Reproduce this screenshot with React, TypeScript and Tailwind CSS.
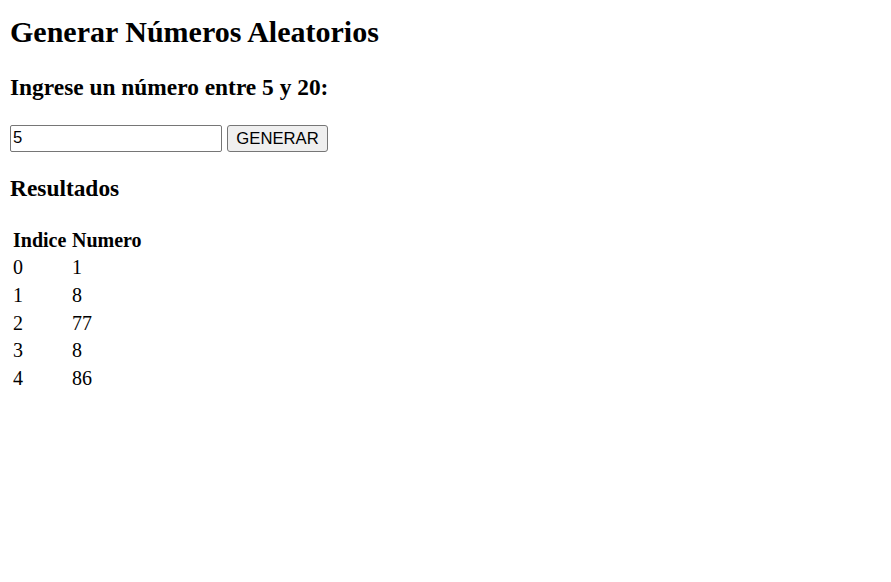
import React from "react";

const rows = [
  { indice: 0, numero: 1 },
  { indice: 1, numero: 8 },
  { indice: 2, numero: 77 },
  { indice: 3, numero: 8 },
  { indice: 4, numero: 86 },
];

const App = () => {
  return (
    <div className="min-h-[582px] bg-white p-[10px] font-['Liberation_Serif','Times_New_Roman',serif] text-black">
      <h1 className="mt-[5px] text-[30px] font-bold leading-[34.5px]">
        Generar Números Aleatorios
      </h1>
      <h3 className="mt-[24px] text-[23.4px] font-bold leading-[27px]">
        Ingrese un número entre 5 y 20:
      </h3>
      <div className="mt-[24px] flex items-center gap-[5px] font-['Liberation_Sans',Arial,sans-serif] text-[16.67px]">
        <input
          type="text"
          defaultValue="5"
          className="h-[27px] w-[212px] rounded-[2px] border border-[#767676] px-[2px] text-black outline-none"
        />
        <button className="h-[27px] w-[101px] rounded-[3px] border border-[#767676] bg-[#efefef] text-black">
          GENERAR
        </button>
      </div>
      <h3 className="mt-[23px] text-[23.4px] font-bold leading-[27px]">
        Resultados
      </h3>
      <table className="ml-[3px] mt-[25px] border-collapse text-[20px] leading-[23px]">
        <thead>
          <tr className="h-[27.6px]">
            <th className="w-[59px] p-0 text-left font-bold">Indice</th>
            <th className="p-0 text-left font-bold">Numero</th>
          </tr>
        </thead>
        <tbody>
          {rows.map((r) => (
            <tr key={r.indice} className="h-[27.6px]">
              <td className="p-0">{r.indice}</td>
              <td className="p-0">{r.numero}</td>
            </tr>
          ))}
        </tbody>
      </table>
    </div>
  );
};

export default App;
